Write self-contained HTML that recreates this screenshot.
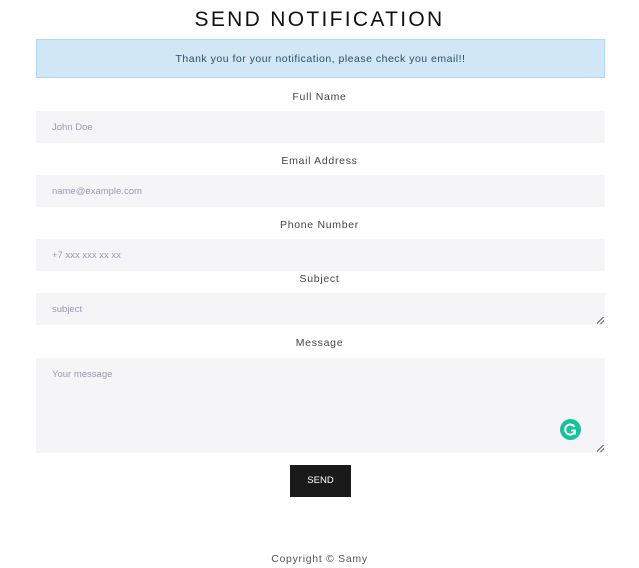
<!DOCTYPE html>
<html><head><style>
*{box-sizing:border-box;margin:0;padding:0}
body{width:639px;height:568px;background:#fff;font-family:"Liberation Sans",sans-serif;position:relative;overflow:hidden}
.a{position:absolute}
h1{position:absolute;left:0;width:639px;top:8px;text-align:center;font-weight:400;font-size:21px;letter-spacing:2.3px;color:#111}
.alert{left:36px;width:569px;top:39px;height:39px;background:#d1e7f5;border:1px solid #b1d8f1;color:#2c4e6b;font-size:10.5px;letter-spacing:.5px;text-align:center;line-height:38px}
.lbl{left:0;width:639px;text-align:center;font-size:10.5px;letter-spacing:.7px;color:#444}
.in{left:36px;width:569px;background:#f5f5f7;color:#9a9ab0;font-size:9.5px;padding-left:16px}
.rz{position:absolute;right:1px;bottom:1px;width:7px;height:7px;background:linear-gradient(135deg,transparent 40%,#666 41%,#666 50%,transparent 51%,transparent 70%,#666 71%,#666 80%,transparent 81%)}
</style></head><body>
<h1>SEND NOTIFICATION</h1>
<div class="a alert">Thank you for your notification, please check you email!!</div>
<div class="a lbl" style="top:91px">Full Name</div>
<div class="a in" style="top:111px;height:32px;line-height:33px">John Doe</div>
<div class="a lbl" style="top:155px">Email Address</div>
<div class="a in" style="top:175px;height:32px;line-height:33px">name@example.com</div>
<div class="a lbl" style="top:219px">Phone Number</div>
<div class="a in" style="top:239px;height:32px;line-height:33px">+7 xxx xxx xx xx</div>
<div class="a lbl" style="top:273px">Subject</div>
<div class="a in" style="top:293px;height:32px;line-height:33px">subject<div class="rz"></div></div>
<div class="a lbl" style="top:337px">Message</div>
<div class="a in" style="top:358px;height:95px;padding-top:11px">Your message<div class="rz"></div>
<div style="position:absolute;left:524px;top:61px;width:21px;height:21px;border-radius:50%;background:#15c39a"><svg width="21" height="21" viewBox="0 0 21 21"><path d="M14.5 8 A5 5 0 1 0 15 12" stroke="#fff" stroke-width="2" fill="none"/><path d="M11 11.5h4v4" stroke="#fff" stroke-width="1.8" fill="none"/></svg></div></div>
<div class="a" style="left:290px;top:465px;width:61px;height:32px;background:#1a1a1a;color:#fff;font-size:9.5px;text-align:center;line-height:32px">SEND</div>
<div class="a lbl" style="top:553px;color:#555">Copyright © Samy</div>
</body></html>
